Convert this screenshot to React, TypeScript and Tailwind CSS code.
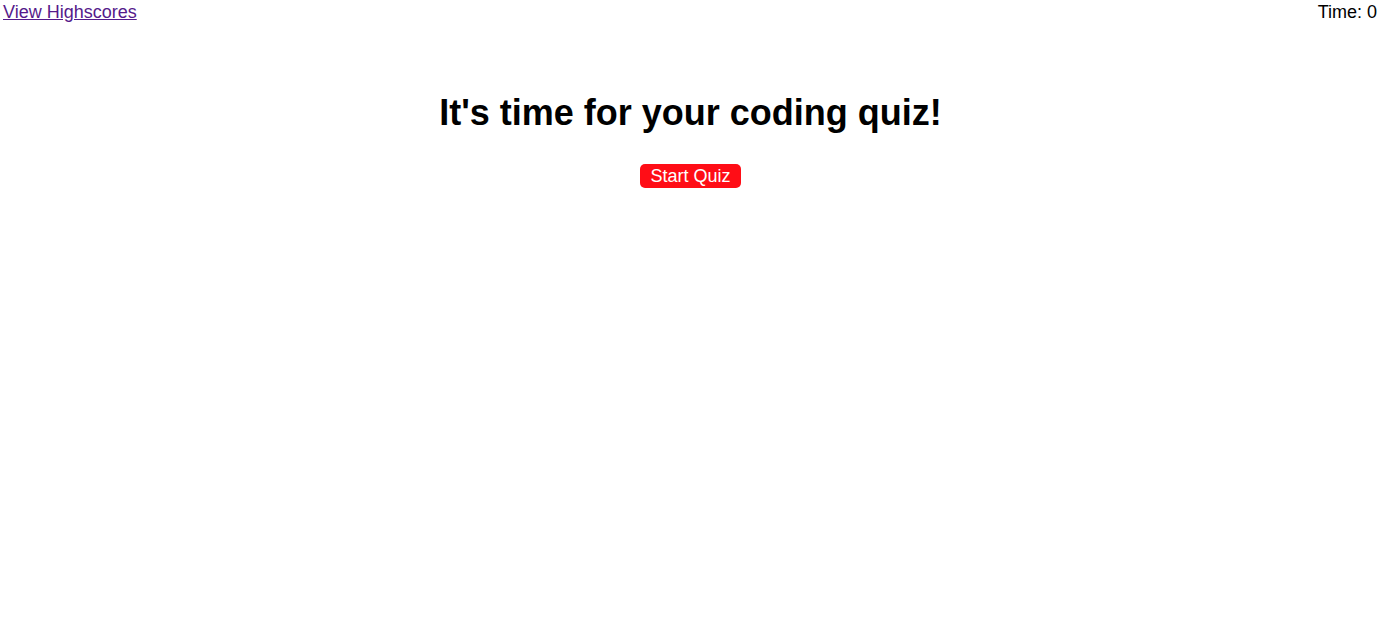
export default function App() {
  return (
    <div className="min-h-screen bg-white text-black font-['Liberation_Sans',Arial,sans-serif]">
      <header className="flex items-start justify-between px-[3px] text-[18px] leading-[24px]">
        <a href="#" className="text-[#551a8b] underline">
          View Highscores
        </a>
        <span className="pr-[1px]">Time: 0</span>
      </header>

      <main className="flex flex-col items-center pt-[65px]">
        <h1 className="text-[36px] font-bold leading-[48px]">
          It's time for your coding quiz!
        </h1>
        <button className="mt-[27px] rounded-[5px] bg-[#ff0d16] px-[10px] text-[18px] leading-[24px] text-white">
          Start Quiz
        </button>
      </main>
    </div>
  );
}
